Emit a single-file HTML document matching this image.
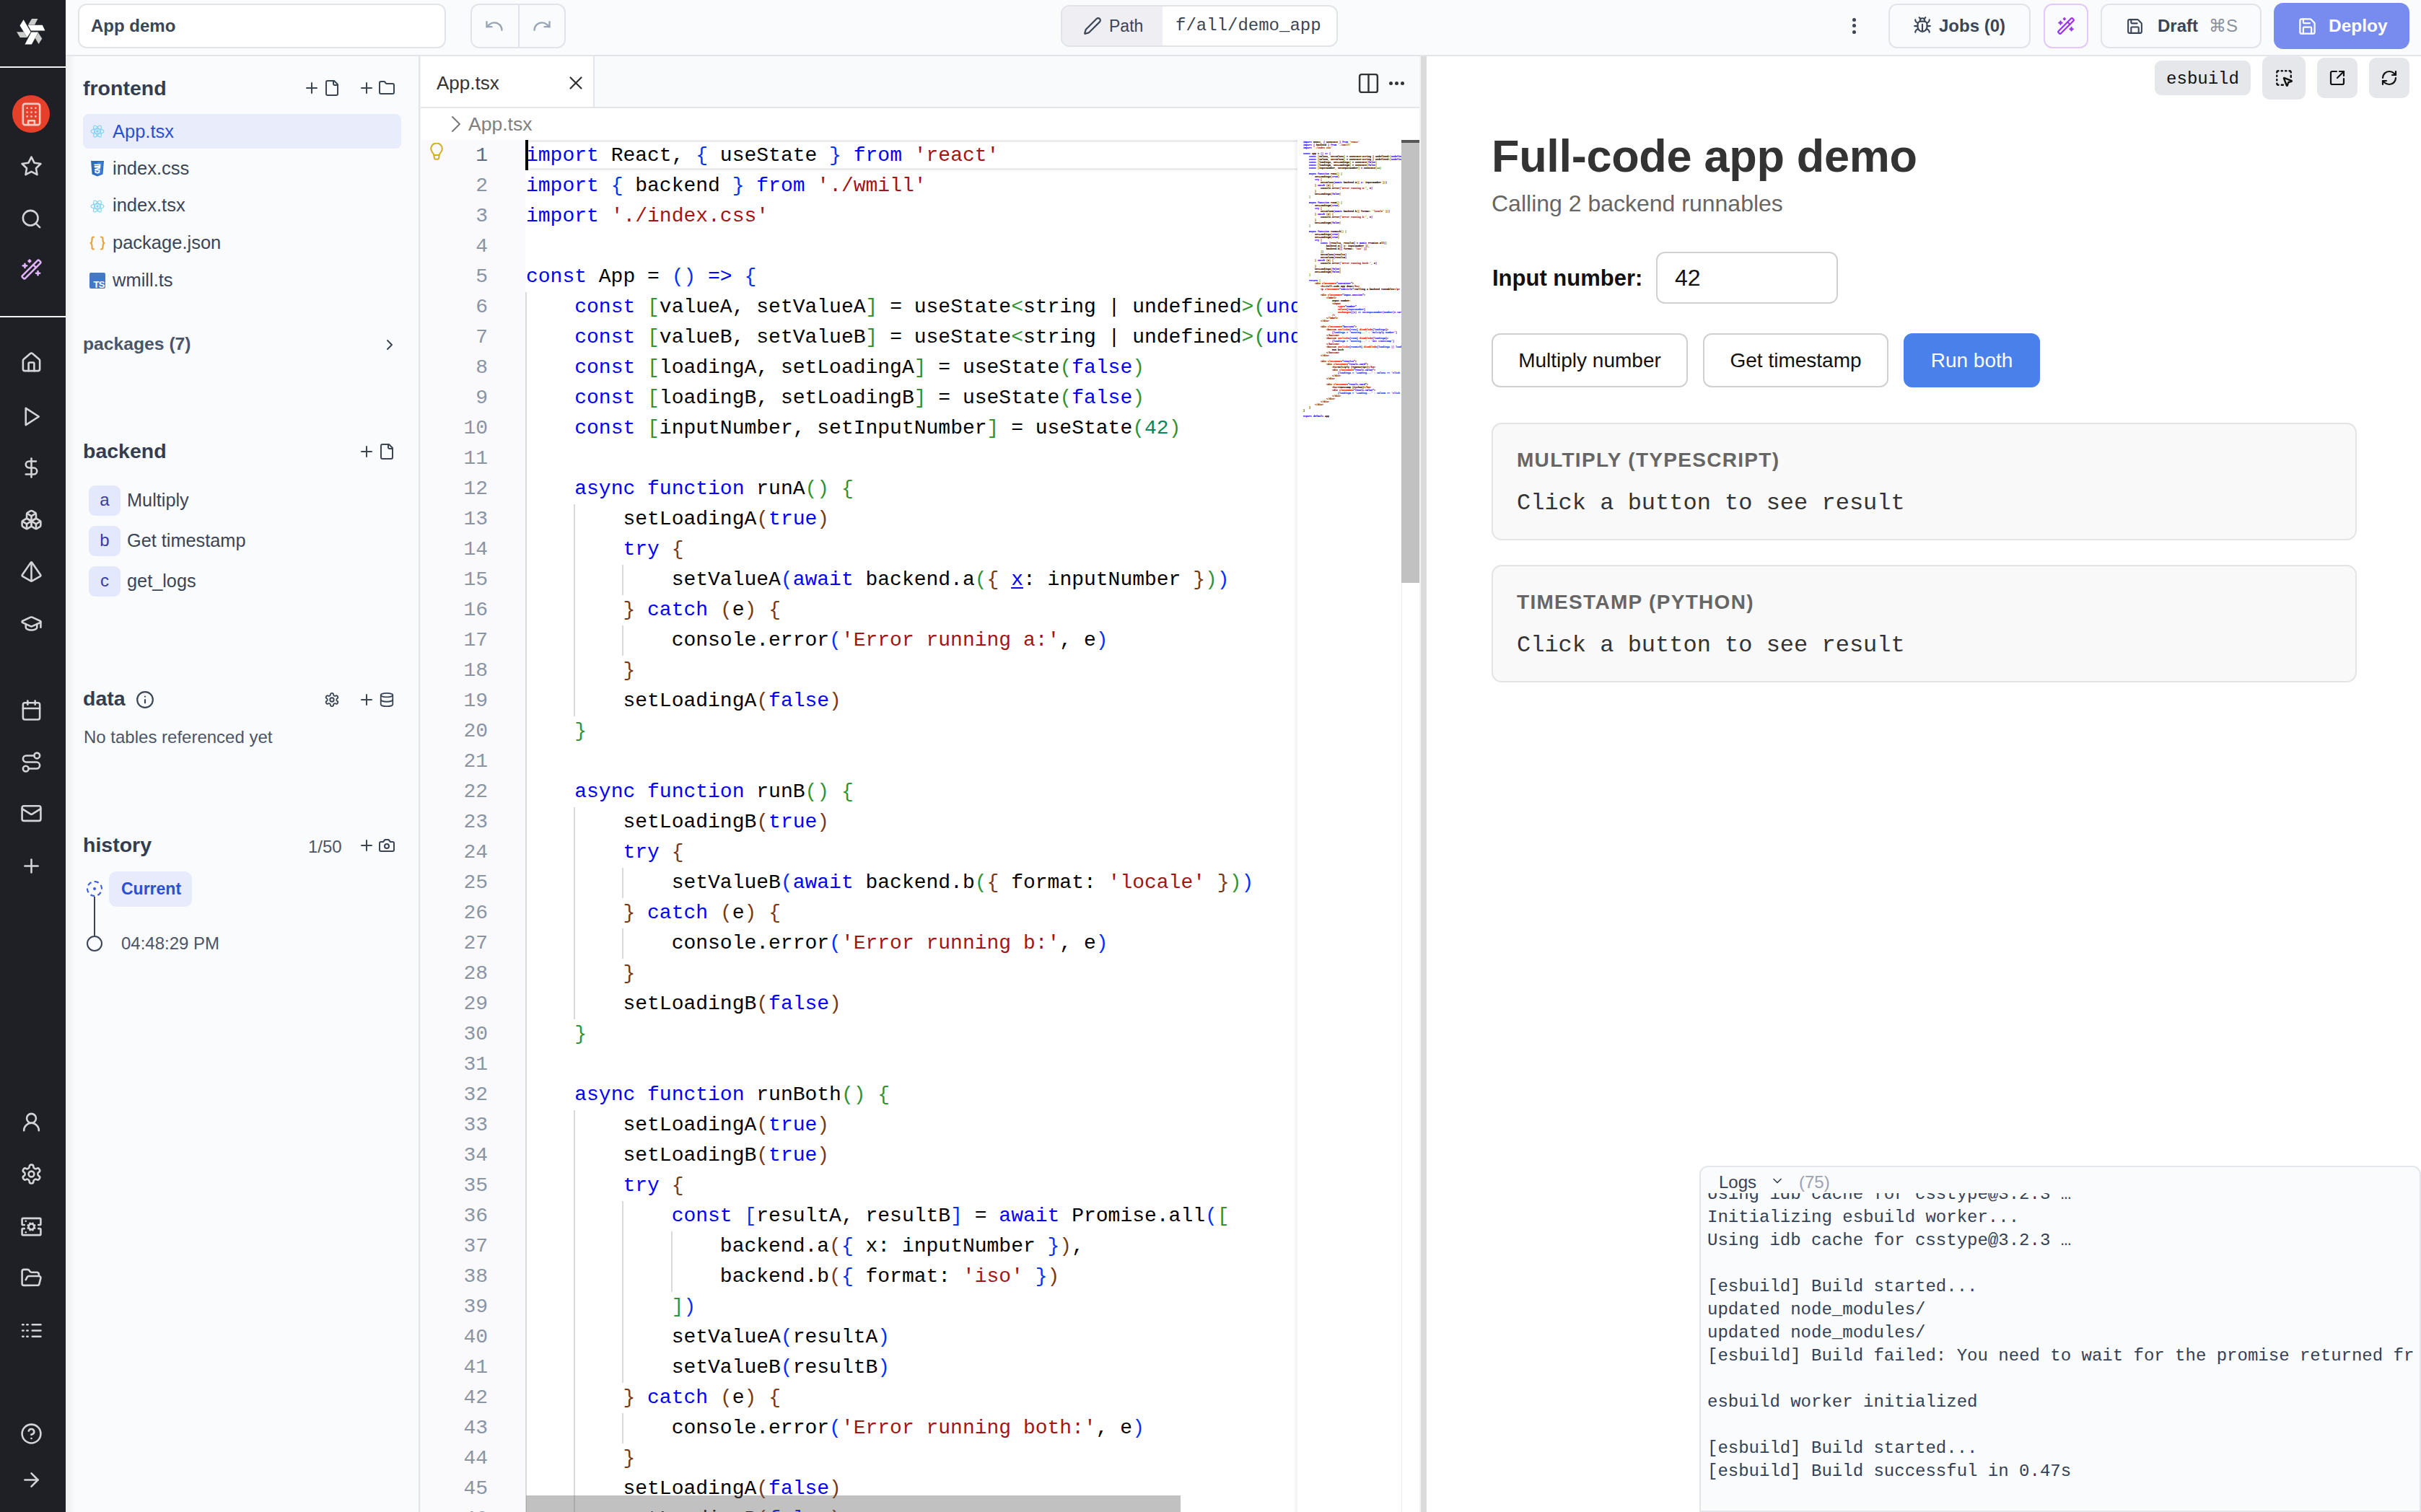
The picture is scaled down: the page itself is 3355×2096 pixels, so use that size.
<!DOCTYPE html>
<html><head><meta charset="utf-8">
<style>
*{box-sizing:border-box;margin:0;padding:0}
html,body{width:3355px;height:2096px;overflow:hidden;background:#fafbfd}
body{position:relative;font-family:"Liberation Sans",sans-serif;color:#3b4556}
.abs{position:absolute}
.ic{position:absolute;line-height:0}
.ic svg{display:block}
.mono{font-family:"Liberation Mono",monospace}
.btn{position:absolute;border:2px solid #e2e4e9;border-radius:12px;background:#fafbfd}
.cl{height:42px;line-height:42px;white-space:pre;font-family:"Liberation Mono",monospace;font-size:28px;color:#000}
.ln{height:42px;line-height:42px;text-align:right;font-family:"Liberation Mono",monospace;font-size:28px;color:#8b94a3}
.ln.act{color:#5d6b82}
.g{position:absolute;width:2px;height:42px;background:#d9d9d9}
.lg{height:32px;line-height:32px;white-space:pre;font-family:"Liberation Mono",monospace;font-size:24px;color:#344154}
.frow{position:absolute;left:115px;width:441px;height:48px;border-radius:8px}
.ftxt{position:absolute;left:41px;top:0;line-height:48px;font-size:25.5px;color:#3b4556}
.sec{position:absolute;left:115px;font-size:28.5px;font-weight:bold;color:#343d4f}
.badge{position:absolute;left:123px;width:44px;height:42px;border-radius:9px;background:#e3e8fc;color:#3a3aa8;font-size:24px;text-align:center;line-height:40px}
.btxt{position:absolute;left:176px;font-size:25.3px;color:#3b4556}
.pbtn{position:absolute;top:462px;height:75px;border:2px solid #d0d0d0;border-radius:12px;background:#fff;font-size:28px;color:#111;text-align:center;line-height:71px}
.card{position:absolute;left:2067px;width:1199px;height:163px;border:2px solid #e4e4e7;border-radius:14px;background:#f9f9fa}
.clab{position:absolute;left:33px;top:34px;font-size:28px;font-weight:bold;color:#666;letter-spacing:1.3px}
.cres{position:absolute;left:33px;top:91px;font-family:"Liberation Mono",monospace;font-size:32px;color:#333}
</style></head><body>

<!-- sidebar -->
<div class="abs" style="left:0;top:0;width:91px;height:2096px;background:#1f2025">
<svg width="50" height="48" viewBox="0 0 1575 1512" style="position:absolute;left:18px;top:20px">
<polygon points="160,760 470,760 620,1005 310,1010" fill="#cbcbcb"/>
<polygon points="460,225 775,765 620,1000 300,490" fill="#fff"/>
<polygon points="820,190 1085,190 945,460 660,460" fill="#cbcbcb"/>
<polygon points="650,465 1285,465 1400,705 785,705" fill="#fff"/>
<polygon points="1110,800 1270,1055 1120,1290 965,1030" fill="#cbcbcb"/>
<polygon points="800,775 1110,775 815,1310 520,1310" fill="#fff"/>
</svg>
<div class="abs" style="left:0;top:92px;width:91px;height:2px;background:#f2f2f2"></div>
<div class="abs" style="left:17px;top:132px;width:52px;height:52px;border-radius:26px;background:#e6402a"></div>
<div class="ic" style="left:25.5px;top:140.5px;width:35px;height:35px"><svg width="35" height="35" viewBox="0 0 24 24" fill="none" stroke="#f5c9c1" stroke-width="1.8" stroke-linecap="round" stroke-linejoin="round" ><rect width="16" height="20" x="4" y="2" rx="2" ry="2"/><path d="M9 22v-4h6v4"/><path d="M8 6h.01"/><path d="M16 6h.01"/><path d="M12 6h.01"/><path d="M12 10h.01"/><path d="M12 14h.01"/><path d="M16 10h.01"/><path d="M16 14h.01"/><path d="M8 10h.01"/><path d="M8 14h.01"/></svg></div>
<div class="abs" style="left:0;top:438px;width:91px;height:2px;background:#f2f2f2"></div>
<div class="ic" style="left:27.5px;top:214.5px;width:31px;height:31px"><svg width="31" height="31" viewBox="0 0 24 24" fill="none" stroke="#d4d4d8" stroke-width="2" stroke-linecap="round" stroke-linejoin="round" ><polygon points="12 2 15.09 8.26 22 9.27 17 14.14 18.18 21.02 12 17.77 5.82 21.02 7 14.14 2 9.27 8.91 8.26 12 2"/></svg></div><div class="ic" style="left:27.5px;top:287.5px;width:31px;height:31px"><svg width="31" height="31" viewBox="0 0 24 24" fill="none" stroke="#d4d4d8" stroke-width="2" stroke-linecap="round" stroke-linejoin="round" ><circle cx="11" cy="11" r="8"/><path d="m21 21-4.3-4.3"/></svg></div><div class="ic" style="left:27.5px;top:486.5px;width:31px;height:31px"><svg width="31" height="31" viewBox="0 0 24 24" fill="none" stroke="#d4d4d8" stroke-width="2" stroke-linecap="round" stroke-linejoin="round" ><path d="M15 21v-8a1 1 0 0 0-1-1h-4a1 1 0 0 0-1 1v8"/><path d="M3 10a2 2 0 0 1 .709-1.528l7-5.999a2 2 0 0 1 2.582 0l7 5.999A2 2 0 0 1 21 10v9a2 2 0 0 1-2 2H5a2 2 0 0 1-2-2z"/></svg></div><div class="ic" style="left:27.5px;top:561.5px;width:31px;height:31px"><svg width="31" height="31" viewBox="0 0 24 24" fill="none" stroke="#d4d4d8" stroke-width="2" stroke-linecap="round" stroke-linejoin="round" ><polygon points="6 3 20 12 6 21 6 3"/></svg></div><div class="ic" style="left:27.5px;top:632.5px;width:31px;height:31px"><svg width="31" height="31" viewBox="0 0 24 24" fill="none" stroke="#d4d4d8" stroke-width="2" stroke-linecap="round" stroke-linejoin="round" ><line x1="12" x2="12" y1="2" y2="22"/><path d="M17 5H9.5a3.5 3.5 0 0 0 0 7h5a3.5 3.5 0 0 1 0 7H6"/></svg></div><div class="ic" style="left:27.5px;top:704.5px;width:31px;height:31px"><svg width="31" height="31" viewBox="0 0 24 24" fill="none" stroke="#d4d4d8" stroke-width="2" stroke-linecap="round" stroke-linejoin="round" ><path d="M2.97 12.92A2 2 0 0 0 2 14.63v3.24a2 2 0 0 0 .97 1.71l3 1.8a2 2 0 0 0 2.06 0L12 19v-5.5l-5-3-4.03 2.42Z"/><path d="m7 16.5-4.74-2.85"/><path d="m7 16.5 5-3"/><path d="M7 16.5v5.17"/><path d="M12 13.5V19l3.97 2.38a2 2 0 0 0 2.06 0l3-1.8a2 2 0 0 0 .97-1.71v-3.24a2 2 0 0 0-.97-1.71L17 10.5l-5 3Z"/><path d="m17 16.5-5-3"/><path d="m17 16.5 4.74-2.85"/><path d="M17 16.5v5.17"/><path d="M7.97 4.42A2 2 0 0 0 7 6.13v4.37l5 3 5-3V6.13a2 2 0 0 0-.97-1.71l-3-1.8a2 2 0 0 0-2.06 0l-3 1.8Z"/><path d="M12 8 7.26 5.15"/><path d="m12 8 4.74-2.85"/><path d="M12 13.5V8"/></svg></div><div class="ic" style="left:27.5px;top:776.5px;width:31px;height:31px"><svg width="31" height="31" viewBox="0 0 24 24" fill="none" stroke="#d4d4d8" stroke-width="2" stroke-linecap="round" stroke-linejoin="round" ><path d="M2.5 16.88a1 1 0 0 1-.32-1.43l9-13.02a1 1 0 0 1 1.64 0l9 13.01a1 1 0 0 1-.32 1.44l-8.51 4.86a2 2 0 0 1-1.98 0Z"/><path d="M12 2v20"/></svg></div><div class="ic" style="left:27.5px;top:848.5px;width:31px;height:31px"><svg width="31" height="31" viewBox="0 0 24 24" fill="none" stroke="#d4d4d8" stroke-width="2" stroke-linecap="round" stroke-linejoin="round" ><path d="M21.42 10.922a1 1 0 0 0-.019-1.838L12.83 5.18a2 2 0 0 0-1.66 0L2.6 9.08a1 1 0 0 0 0 1.832l8.57 3.908a2 2 0 0 0 1.66 0z"/><path d="M22 10v6"/><path d="M6 12.5V16a6 3 0 0 0 12 0v-3.5"/></svg></div><div class="ic" style="left:27.5px;top:968.5px;width:31px;height:31px"><svg width="31" height="31" viewBox="0 0 24 24" fill="none" stroke="#d4d4d8" stroke-width="2" stroke-linecap="round" stroke-linejoin="round" ><rect width="18" height="18" x="3" y="4" rx="2"/><path d="M16 2v4"/><path d="M8 2v4"/><path d="M3 10h18"/></svg></div><div class="ic" style="left:27.5px;top:1040.5px;width:31px;height:31px"><svg width="31" height="31" viewBox="0 0 24 24" fill="none" stroke="#d4d4d8" stroke-width="2" stroke-linecap="round" stroke-linejoin="round" ><circle cx="6" cy="19" r="3"/><path d="M9 19h8.5a3.5 3.5 0 0 0 0-7h-11a3.5 3.5 0 0 1 0-7H15"/><circle cx="18" cy="5" r="3"/></svg></div><div class="ic" style="left:27.5px;top:1111.5px;width:31px;height:31px"><svg width="31" height="31" viewBox="0 0 24 24" fill="none" stroke="#d4d4d8" stroke-width="2" stroke-linecap="round" stroke-linejoin="round" ><rect width="20" height="16" x="2" y="4" rx="2"/><path d="m22 7-8.97 5.7a1.94 1.94 0 0 1-2.06 0L2 7"/></svg></div><div class="ic" style="left:27.5px;top:1184.5px;width:31px;height:31px"><svg width="31" height="31" viewBox="0 0 24 24" fill="none" stroke="#d4d4d8" stroke-width="2" stroke-linecap="round" stroke-linejoin="round" ><path d="M5 12h14"/><path d="M12 5v14"/></svg></div><div class="ic" style="left:27.5px;top:1539.5px;width:31px;height:31px"><svg width="31" height="31" viewBox="0 0 24 24" fill="none" stroke="#d4d4d8" stroke-width="2" stroke-linecap="round" stroke-linejoin="round" ><circle cx="12" cy="8" r="5"/><path d="M20 21a8 8 0 0 0-16 0"/></svg></div><div class="ic" style="left:27.5px;top:1611.5px;width:31px;height:31px"><svg width="31" height="31" viewBox="0 0 24 24" fill="none" stroke="#d4d4d8" stroke-width="2" stroke-linecap="round" stroke-linejoin="round" ><path d="M12.22 2h-.44a2 2 0 0 0-2 2v.18a2 2 0 0 1-1 1.73l-.43.25a2 2 0 0 1-2 0l-.15-.08a2 2 0 0 0-2.73.73l-.22.38a2 2 0 0 0 .73 2.73l.15.1a2 2 0 0 1 1 1.72v.51a2 2 0 0 1-1 1.74l-.15.09a2 2 0 0 0-.73 2.73l.22.38a2 2 0 0 0 2.73.73l.15-.08a2 2 0 0 1 2 0l.43.25a2 2 0 0 1 1 1.73V20a2 2 0 0 0 2 2h.44a2 2 0 0 0 2-2v-.18a2 2 0 0 1 1-1.73l.43-.25a2 2 0 0 1 2 0l.15.08a2 2 0 0 0 2.73-.73l.22-.39a2 2 0 0 0-.73-2.73l-.15-.08a2 2 0 0 1-1-1.74v-.5a2 2 0 0 1 1-1.74l.15-.09a2 2 0 0 0 .73-2.73l-.22-.38a2 2 0 0 0-2.73-.73l-.15.08a2 2 0 0 1-2 0l-.43-.25a2 2 0 0 1-1-1.73V4a2 2 0 0 0-2-2z"/><circle cx="12" cy="12" r="3"/></svg></div><div class="ic" style="left:27.5px;top:1684.5px;width:31px;height:31px"><svg width="31" height="31" viewBox="0 0 24 24" fill="none" stroke="#d4d4d8" stroke-width="2" stroke-linecap="round" stroke-linejoin="round" ><path d="m10.852 14.772-.383.923"/><path d="M13.148 14.772a3 3 0 1 0-2.296-5.544l-.383-.923"/><path d="m13.148 9.228.383-.923"/><path d="m13.53 15.696-.382-.924a3 3 0 1 1-2.296-5.544"/><path d="m14.772 10.852.923-.383"/><path d="m14.772 13.148.923.383"/><path d="M4.5 10H3a1 1 0 0 1-1-1V4a1 1 0 0 1 1-1h18a1 1 0 0 1 1 1v5a1 1 0 0 1-1 1h-1.5"/><path d="M4.5 14H3a1 1 0 0 0-1 1v5a1 1 0 0 0 1 1h18a1 1 0 0 0 1-1v-5a1 1 0 0 0-1-1h-1.5"/><path d="M6 18h.01"/><path d="M6 6h.01"/><path d="m9.228 10.852-.923-.383"/><path d="m9.228 13.148-.923.383"/></svg></div><div class="ic" style="left:27.5px;top:1755.5px;width:31px;height:31px"><svg width="31" height="31" viewBox="0 0 24 24" fill="none" stroke="#d4d4d8" stroke-width="2" stroke-linecap="round" stroke-linejoin="round" ><path d="m6 14 1.5-2.9A2 2 0 0 1 9.24 10H20a2 2 0 0 1 1.94 2.5l-1.54 6a2 2 0 0 1-1.95 1.5H4a2 2 0 0 1-2-2V5a2 2 0 0 1 2-2h3.9a2 2 0 0 1 1.69.9l.81 1.2a2 2 0 0 0 1.67.9H18a2 2 0 0 1 2 2v2"/></svg></div><div class="ic" style="left:27.5px;top:1828.5px;width:31px;height:31px"><svg width="31" height="31" viewBox="0 0 24 24" fill="none" stroke="#d4d4d8" stroke-width="2" stroke-linecap="round" stroke-linejoin="round" ><path d="M2.5 5.6h1"/><path d="M7.2 5.6h1"/><path d="M13 5.6h9"/><path d="M2.5 12h1"/><path d="M7.2 12h1"/><path d="M13 12h9"/><path d="M2.5 18.4h1"/><path d="M7.2 18.4h1"/><path d="M13 18.4h9"/></svg></div><div class="ic" style="left:27.5px;top:1971.5px;width:31px;height:31px"><svg width="31" height="31" viewBox="0 0 24 24" fill="none" stroke="#d4d4d8" stroke-width="2" stroke-linecap="round" stroke-linejoin="round" ><circle cx="12" cy="12" r="10"/><path d="M9.09 9a3 3 0 0 1 5.83 1c0 2-3 3-3 3"/><path d="M12 17h.01"/></svg></div><div class="ic" style="left:27.5px;top:2035.5px;width:31px;height:31px"><svg width="31" height="31" viewBox="0 0 24 24" fill="none" stroke="#d4d4d8" stroke-width="2" stroke-linecap="round" stroke-linejoin="round" ><path d="M5 12h14"/><path d="m12 5 7 7-7 7"/></svg></div><div class="ic" style="left:27.5px;top:357.5px;width:31px;height:31px"><svg width="31" height="31" viewBox="0 0 24 24" fill="none" stroke="#e0b2fa" stroke-width="2" stroke-linecap="round" stroke-linejoin="round" ><path d="m21.64 3.64-1.28-1.28a1.21 1.21 0 0 0-1.72 0L2.36 18.64a1.21 1.21 0 0 0 0 1.72l1.28 1.28a1.2 1.2 0 0 0 1.72 0L21.64 5.36a1.2 1.2 0 0 0 0-1.72"/><path d="m14 7 3 3"/><path d="M5 6v4"/><path d="M19 14v4"/><path d="M10 2v2"/><path d="M7 8H3"/><path d="M21 16h-4"/><path d="M11 3H9"/></svg></div>
</div>

<!-- top bar -->
<div class="abs" style="left:91px;top:0;width:3264px;height:78px;background:#fafbfd;border-bottom:2px solid #e3e5ea"></div>
<div class="btn" style="left:108px;top:5px;width:510px;height:62px;background:#fff"><div class="abs" style="left:16px;top:0;line-height:58px;font-size:24px;font-weight:bold;color:#3b4556">App demo</div></div>
<div class="btn" style="left:652px;top:5px;width:132px;height:62px"><div class="abs" style="left:64px;top:0;width:2px;height:58px;background:#e2e4e9"></div></div>
<div class="ic" style="left:671.0px;top:22.0px;width:28px;height:28px"><svg width="28" height="28" viewBox="0 0 24 24" fill="none" stroke="#9aa5b4" stroke-width="2" stroke-linecap="round" stroke-linejoin="round" ><path d="M3 7v6h6"/><path d="M21 17a9 9 0 0 0-9-9 9 9 0 0 0-6 2.3L3 13"/></svg></div>
<div class="ic" style="left:737.0px;top:22.0px;width:28px;height:28px"><svg width="28" height="28" viewBox="0 0 24 24" fill="none" stroke="#9aa5b4" stroke-width="2" stroke-linecap="round" stroke-linejoin="round" ><path d="M21 7v6h-6"/><path d="M3 17a9 9 0 0 1 9-9 9 9 0 0 1 6 2.3l3 2.7"/></svg></div>
<div class="btn" style="left:1470px;top:7px;width:384px;height:58px;background:#fff;overflow:hidden"><div class="abs" style="left:0;top:0;width:139px;height:54px;background:#eeeef3"></div>
<div class="abs" style="left:65px;top:0;line-height:54px;font-size:23px;color:#3b4556">Path</div>
<div class="abs mono" style="left:157px;top:0;line-height:54px;font-size:24px;color:#3b4556">f/all/demo_app</div></div>
<div class="ic" style="left:1501.0px;top:23.0px;width:26px;height:26px"><svg width="26" height="26" viewBox="0 0 24 24" fill="none" stroke="#3b4556" stroke-width="2" stroke-linecap="round" stroke-linejoin="round" ><path d="M21.174 6.812a1 1 0 0 0-3.986-3.987L3.842 16.174a2 2 0 0 0-.5.83l-1.321 4.352a.5.5 0 0 0 .623.622l4.353-1.32a2 2 0 0 0 .83-.497z"/></svg></div>
<div class="abs" style="left:2567px;top:25px;width:5px;height:5px;border-radius:3px;background:#3b4556"></div>
<div class="abs" style="left:2567px;top:33px;width:5px;height:5px;border-radius:3px;background:#3b4556"></div>
<div class="abs" style="left:2567px;top:42px;width:5px;height:5px;border-radius:3px;background:#3b4556"></div>
<div class="btn" style="left:2617px;top:5px;width:197px;height:62px"><div class="abs" style="left:68px;top:0;line-height:58px;font-size:24px;font-weight:bold;color:#3b4556">Jobs (0)</div></div>
<div class="ic" style="left:2651.0px;top:22.0px;width:26px;height:26px"><svg width="26" height="26" viewBox="0 0 24 24" fill="none" stroke="#3b4556" stroke-width="2" stroke-linecap="round" stroke-linejoin="round" ><path d="m8 2 1.88 1.88"/><path d="M14.12 3.88 16 2"/><path d="M9 7.13v-1a3.003 3.003 0 1 1 6 0v1"/><path d="M12 20c-3.3 0-6-2.7-6-6v-3a4 4 0 0 1 4-4h4a4 4 0 0 1 4 4v3c0 3.3-2.7 6-6 6"/><path d="M12 20v-9"/><path d="M6.53 9C4.6 8.8 3 7.1 3 5"/><path d="M6 13H2"/><path d="M3 21c0-2.1 1.7-3.9 3.8-4"/><path d="M20.97 5c0 2.1-1.6 3.8-3.5 4"/><path d="M22 13h-4"/><path d="M17.2 17c2.1.1 3.8 1.9 3.8 4"/></svg></div>
<div class="btn" style="left:2832px;top:5px;width:62px;height:62px;border-color:#e3c8fb"></div>
<div class="ic" style="left:2850.0px;top:23.0px;width:26px;height:26px"><svg width="26" height="26" viewBox="0 0 24 24" fill="none" stroke="#9b30e8" stroke-width="2" stroke-linecap="round" stroke-linejoin="round" ><path d="m21.64 3.64-1.28-1.28a1.21 1.21 0 0 0-1.72 0L2.36 18.64a1.21 1.21 0 0 0 0 1.72l1.28 1.28a1.2 1.2 0 0 0 1.72 0L21.64 5.36a1.2 1.2 0 0 0 0-1.72"/><path d="m14 7 3 3"/><path d="M5 6v4"/><path d="M19 14v4"/><path d="M10 2v2"/><path d="M7 8H3"/><path d="M21 16h-4"/><path d="M11 3H9"/></svg></div>
<div class="btn" style="left:2911px;top:5px;width:223px;height:62px"><div class="abs" style="left:77px;top:0;line-height:58px;font-size:24px;font-weight:bold;color:#3b4556">Draft</div><div class="abs" style="left:148px;top:0;line-height:58px;font-size:24px;color:#8b919b">&#8984;S</div></div>
<div class="ic" style="left:2945.5px;top:23.5px;width:25px;height:25px"><svg width="25" height="25" viewBox="0 0 24 24" fill="none" stroke="#3b4556" stroke-width="2" stroke-linecap="round" stroke-linejoin="round" ><path d="M15.2 3a2 2 0 0 1 1.4.6l3.8 3.8a2 2 0 0 1 .6 1.4V19a2 2 0 0 1-2 2H5a2 2 0 0 1-2-2V5a2 2 0 0 1 2-2z"/><path d="M17 21v-7a1 1 0 0 0-1-1H8a1 1 0 0 0-1 1v7"/><path d="M7 3v4a1 1 0 0 0 1 1h7"/></svg></div>
<div class="abs" style="left:3151px;top:4px;width:188px;height:64px;border-radius:13px;background:#788cef"><div class="abs" style="left:76px;top:0;line-height:64px;font-size:24.5px;font-weight:bold;color:#fff">Deploy</div></div>
<div class="ic" style="left:3183.5px;top:22.5px;width:27px;height:27px"><svg width="27" height="27" viewBox="0 0 24 24" fill="none" stroke="#ffffff" stroke-width="2" stroke-linecap="round" stroke-linejoin="round" ><path d="M15.2 3a2 2 0 0 1 1.4.6l3.8 3.8a2 2 0 0 1 .6 1.4V19a2 2 0 0 1-2 2H5a2 2 0 0 1-2-2V5a2 2 0 0 1 2-2z"/><path d="M17 21v-7a1 1 0 0 0-1-1H8a1 1 0 0 0-1 1v7"/><path d="M7 3v4a1 1 0 0 0 1 1h7"/></svg></div>

<!-- file panel -->
<div class="abs" style="left:91px;top:78px;width:491px;height:2018px;background:#fafbfd;border-right:2px solid #e3e5ea"></div><div class="abs" style="left:582px;top:78px;width:2px;height:2018px;background:#f4f4f3"></div>
<div class="abs" style="left:91px;top:78px;width:14px;height:2018px;background:linear-gradient(90deg,rgba(0,0,0,0.05),rgba(0,0,0,0))"></div>
<div class="sec" style="top:106px">frontend</div>
<div class="ic" style="left:420.0px;top:110.0px;width:24px;height:24px"><svg width="24" height="24" viewBox="0 0 24 24" fill="none" stroke="#3b4556" stroke-width="2" stroke-linecap="round" stroke-linejoin="round" ><path d="M5 12h14"/><path d="M12 5v14"/></svg></div><div class="ic" style="left:448.0px;top:110.0px;width:24px;height:24px"><svg width="24" height="24" viewBox="0 0 24 24" fill="none" stroke="#3b4556" stroke-width="2" stroke-linecap="round" stroke-linejoin="round" ><path d="M15 2H6a2 2 0 0 0-2 2v16a2 2 0 0 0 2 2h12a2 2 0 0 0 2-2V7Z"/><path d="M14 2v4a2 2 0 0 0 2 2h4"/></svg></div>
<div class="ic" style="left:496.0px;top:110.0px;width:24px;height:24px"><svg width="24" height="24" viewBox="0 0 24 24" fill="none" stroke="#3b4556" stroke-width="2" stroke-linecap="round" stroke-linejoin="round" ><path d="M5 12h14"/><path d="M12 5v14"/></svg></div><div class="ic" style="left:524.0px;top:110.0px;width:24px;height:24px"><svg width="24" height="24" viewBox="0 0 24 24" fill="none" stroke="#3b4556" stroke-width="2" stroke-linecap="round" stroke-linejoin="round" ><path d="M20 20a2 2 0 0 0 2-2V8a2 2 0 0 0-2-2h-7.9a2 2 0 0 1-1.69-.9L9.6 3.9A2 2 0 0 0 7.93 3H4a2 2 0 0 0-2 2v13a2 2 0 0 0 2 2Z"/></svg></div>
<div class="frow" style="top:158px;background:#e8ecfb"><div class="ftxt" style="color:#2b4fd6">App.tsx</div></div>
<div class="frow" style="top:209px"><div class="ftxt">index.css</div></div>
<div class="frow" style="top:260px"><div class="ftxt">index.tsx</div></div>
<div class="frow" style="top:312px"><div class="ftxt">package.json</div></div>
<div class="frow" style="top:364px"><div class="ftxt">wmill.ts</div></div>
<svg class="abs" style="left:125px;top:173px" width="20" height="18" viewBox="-12 -11 24 22" fill="none" stroke="#7fd3f5" stroke-width="1.4"><ellipse rx="11" ry="4.2"/><ellipse rx="11" ry="4.2" transform="rotate(60)"/><ellipse rx="11" ry="4.2" transform="rotate(120)"/><circle r="2.2" fill="#7fd3f5" stroke="none"/></svg><svg class="abs" style="left:126px;top:223px" width="18" height="22" viewBox="0 0 18 22"><path d="M0 0H18L16.4 18.5L9 21.5L1.6 18.5Z" fill="#2f6ac0"/><path d="M9 1.5H16.3L15 17.6L9 20Z" fill="#3d80d8"/><path d="M4.5 4.5H13.5L13 10.5L9.5 11.8L9 12L12.7 12.2L12.2 16.5L9 17.8L5.5 16.5L5.3 14H7.3L7.4 15.2L9 15.8L10.4 15.2L10.6 13.5H5.2L5 11.5L10.8 9.5H4.9L4.7 7L11.2 6.9L11.3 6.3H4.6Z" fill="#fff"/></svg><svg class="abs" style="left:125px;top:277px" width="20" height="18" viewBox="-12 -11 24 22" fill="none" stroke="#7fd3f5" stroke-width="1.4"><ellipse rx="11" ry="4.2"/><ellipse rx="11" ry="4.2" transform="rotate(60)"/><ellipse rx="11" ry="4.2" transform="rotate(120)"/><circle r="2.2" fill="#7fd3f5" stroke="none"/></svg><svg class="abs" style="left:124px;top:327px" width="22" height="20" viewBox="0 0 22 20" fill="none" stroke="#e9a23b" stroke-width="2.2" stroke-linecap="round" stroke-linejoin="round"><path d="M6 1.5C3.5 1.5 3.5 3 3.5 5.5C3.5 8 3 9.5 1.5 10C3 10.5 3.5 12 3.5 14.5C3.5 17 3.5 18.5 6 18.5"/><path d="M16 1.5C18.5 1.5 18.5 3 18.5 5.5C18.5 8 19 9.5 20.5 10C19 10.5 18.5 12 18.5 14.5C18.5 17 18.5 18.5 16 18.5"/></svg><div class="abs" style="left:124px;top:378px;width:22px;height:22px;border-radius:2px;background:#4378c7"><div class="abs" style="right:1px;bottom:-3px;font-size:13px;font-weight:bold;color:#fff;line-height:16px;letter-spacing:-0.5px">TS</div></div>
<div class="abs" style="left:115px;top:463px;font-size:24.7px;font-weight:bold;color:#4b5568">packages (7)</div>
<div class="ic" style="left:528.0px;top:466.0px;width:24px;height:24px"><svg width="24" height="24" viewBox="0 0 24 24" fill="none" stroke="#3b4556" stroke-width="2" stroke-linecap="round" stroke-linejoin="round" ><path d="m9 18 6-6-6-6"/></svg></div>
<div class="sec" style="top:609px">backend</div>
<div class="ic" style="left:496.0px;top:614.0px;width:24px;height:24px"><svg width="24" height="24" viewBox="0 0 24 24" fill="none" stroke="#3b4556" stroke-width="2" stroke-linecap="round" stroke-linejoin="round" ><path d="M5 12h14"/><path d="M12 5v14"/></svg></div><div class="ic" style="left:524.0px;top:614.0px;width:24px;height:24px"><svg width="24" height="24" viewBox="0 0 24 24" fill="none" stroke="#3b4556" stroke-width="2" stroke-linecap="round" stroke-linejoin="round" ><path d="M15 2H6a2 2 0 0 0-2 2v16a2 2 0 0 0 2 2h12a2 2 0 0 0 2-2V7Z"/><path d="M14 2v4a2 2 0 0 0 2 2h4"/></svg></div>
<div class="badge" style="top:673px">a</div><div class="btxt" style="top:679px">Multiply</div>
<div class="badge" style="top:729px">b</div><div class="btxt" style="top:735px">Get timestamp</div>
<div class="badge" style="top:785px">c</div><div class="btxt" style="top:791px">get_logs</div>
<div class="sec" style="top:952px">data</div>
<div class="ic" style="left:188.0px;top:957.0px;width:26px;height:26px"><svg width="26" height="26" viewBox="0 0 24 24" fill="none" stroke="#3b4556" stroke-width="2" stroke-linecap="round" stroke-linejoin="round" ><circle cx="12" cy="12" r="10"/><path d="M12 16v-4"/><path d="M12 8h.01"/></svg></div>
<div class="ic" style="left:449.0px;top:959.0px;width:22px;height:22px"><svg width="22" height="22" viewBox="0 0 24 24" fill="none" stroke="#3b4556" stroke-width="2" stroke-linecap="round" stroke-linejoin="round" ><path d="M12.22 2h-.44a2 2 0 0 0-2 2v.18a2 2 0 0 1-1 1.73l-.43.25a2 2 0 0 1-2 0l-.15-.08a2 2 0 0 0-2.73.73l-.22.38a2 2 0 0 0 .73 2.73l.15.1a2 2 0 0 1 1 1.72v.51a2 2 0 0 1-1 1.74l-.15.09a2 2 0 0 0-.73 2.73l.22.38a2 2 0 0 0 2.73.73l.15-.08a2 2 0 0 1 2 0l.43.25a2 2 0 0 1 1 1.73V20a2 2 0 0 0 2 2h.44a2 2 0 0 0 2-2v-.18a2 2 0 0 1 1-1.73l.43-.25a2 2 0 0 1 2 0l.15.08a2 2 0 0 0 2.73-.73l.22-.39a2 2 0 0 0-.73-2.73l-.15-.08a2 2 0 0 1-1-1.74v-.5a2 2 0 0 1 1-1.74l.15-.09a2 2 0 0 0 .73-2.73l-.22-.38a2 2 0 0 0-2.73-.73l-.15.08a2 2 0 0 1-2 0l-.43-.25a2 2 0 0 1-1-1.73V4a2 2 0 0 0-2-2z"/><circle cx="12" cy="12" r="3"/></svg></div>
<div class="ic" style="left:496.0px;top:958.0px;width:24px;height:24px"><svg width="24" height="24" viewBox="0 0 24 24" fill="none" stroke="#3b4556" stroke-width="2" stroke-linecap="round" stroke-linejoin="round" ><path d="M5 12h14"/><path d="M12 5v14"/></svg></div><div class="ic" style="left:525.0px;top:959.0px;width:22px;height:22px"><svg width="22" height="22" viewBox="0 0 24 24" fill="none" stroke="#3b4556" stroke-width="2" stroke-linecap="round" stroke-linejoin="round" ><ellipse cx="12" cy="5" rx="9" ry="3"/><path d="M3 5V19A9 3 0 0 0 21 19V5"/><path d="M3 12A9 3 0 0 0 21 12"/></svg></div>
<div class="abs" style="left:116px;top:1008px;font-size:24px;color:#4b5568">No tables referenced yet</div>
<div class="sec" style="top:1155px">history</div>
<div class="abs" style="left:427px;top:1160px;font-size:24px;color:#4b5568">1/50</div>
<div class="ic" style="left:496.0px;top:1160.0px;width:24px;height:24px"><svg width="24" height="24" viewBox="0 0 24 24" fill="none" stroke="#3b4556" stroke-width="2" stroke-linecap="round" stroke-linejoin="round" ><path d="M5 12h14"/><path d="M12 5v14"/></svg></div><div class="ic" style="left:524.0px;top:1160.0px;width:24px;height:24px"><svg width="24" height="24" viewBox="0 0 24 24" fill="none" stroke="#3b4556" stroke-width="2" stroke-linecap="round" stroke-linejoin="round" ><path d="M14.5 4h-5L7 7H4a2 2 0 0 0-2 2v9a2 2 0 0 0 2 2h16a2 2 0 0 0 2-2V9a2 2 0 0 0-2-2h-3l-2.5-3z"/><circle cx="12" cy="13" r="3"/></svg></div>
<div class="abs" style="left:120px;top:1221px;width:22px;height:22px;border:2px dashed #3b5bdb;border-radius:11px"></div>
<div class="abs" style="left:129px;top:1230px;width:4px;height:4px;border-radius:2px;background:#3b5bdb"></div>
<div class="abs" style="left:130px;top:1243px;width:2px;height:54px;background:#3b4556"></div>
<div class="abs" style="left:120px;top:1297px;width:22px;height:22px;border:2px solid #3b4556;border-radius:11px"></div>
<div class="abs" style="left:151px;top:1208px;width:115px;height:49px;border-radius:10px;background:#e7ebfb"><div class="abs" style="left:17px;top:0;line-height:49px;font-size:23px;font-weight:bold;color:#2b4fd6">Current</div></div>
<div class="abs" style="left:168px;top:1294px;font-size:24px;color:#4b5568">04:48:29 PM</div>

<!-- editor -->
<div class="abs" style="left:583px;top:78px;width:1384px;height:2018px;background:#fff;overflow:hidden">
  <div class="abs" style="left:0;top:0;width:1384px;height:72px;background:#f9fafc;border-bottom:2px solid #e3e5ea"></div>
  <div class="abs" style="left:0;top:0;width:241px;height:70px;background:#fff;border-right:2px solid #e3e5ea"><div class="abs" style="left:22px;top:2px;line-height:70px;font-size:26px;color:#333">App.tsx</div></div>
</div>
<div class="ic" style="left:783.0px;top:100.0px;width:30px;height:30px"><svg width="30" height="30" viewBox="0 0 24 24" fill="none" stroke="#333" stroke-width="1.8" stroke-linecap="round" stroke-linejoin="round" ><path d="M18 6 6 18"/><path d="m6 6 12 12"/></svg></div>
<div class="ic" style="left:1879.5px;top:98.5px;width:33px;height:33px"><svg width="33" height="33" viewBox="0 0 24 24" fill="none" stroke="#333" stroke-width="1.8" stroke-linecap="round" stroke-linejoin="round" ><rect width="18" height="18" x="3" y="3" rx="2"/><path d="M12 3v18"/></svg></div>
<div class="abs" style="left:1925px;top:113px;width:5px;height:5px;border-radius:3px;background:#333"></div>
<div class="abs" style="left:1933px;top:113px;width:5px;height:5px;border-radius:3px;background:#333"></div>
<div class="abs" style="left:1941px;top:113px;width:5px;height:5px;border-radius:3px;background:#333"></div>
<div class="ic" style="left:612.0px;top:152.0px;width:40px;height:40px"><svg width="40" height="40" viewBox="0 0 24 24" fill="none" stroke="#777" stroke-width="1.2" stroke-linecap="round" stroke-linejoin="round" ><path d="m9 18 6-6-6-6"/></svg></div>
<div class="abs" style="left:649px;top:157px;font-size:26.5px;color:#808080">App.tsx</div>
<div class="abs" style="left:584px;top:194px;width:144px;height:1902px;background:#fafafc"></div>
<div class="abs" style="left:728px;top:194px;width:1070px;height:42px;border-top:3px solid #ececec;border-bottom:3px solid #ececec"></div>
<div class="abs" style="left:583px;top:195px;width:93px"><div class="ln act">1</div><div class="ln">2</div><div class="ln">3</div><div class="ln">4</div><div class="ln">5</div><div class="ln">6</div><div class="ln">7</div><div class="ln">8</div><div class="ln">9</div><div class="ln">10</div><div class="ln">11</div><div class="ln">12</div><div class="ln">13</div><div class="ln">14</div><div class="ln">15</div><div class="ln">16</div><div class="ln">17</div><div class="ln">18</div><div class="ln">19</div><div class="ln">20</div><div class="ln">21</div><div class="ln">22</div><div class="ln">23</div><div class="ln">24</div><div class="ln">25</div><div class="ln">26</div><div class="ln">27</div><div class="ln">28</div><div class="ln">29</div><div class="ln">30</div><div class="ln">31</div><div class="ln">32</div><div class="ln">33</div><div class="ln">34</div><div class="ln">35</div><div class="ln">36</div><div class="ln">37</div><div class="ln">38</div><div class="ln">39</div><div class="ln">40</div><div class="ln">41</div><div class="ln">42</div><div class="ln">43</div><div class="ln">44</div><div class="ln">45</div><div class="ln">46</div></div>
<svg class="abs" style="left:596px;top:198px" width="18" height="24" viewBox="0 0 18 24" fill="none" stroke="#d4ab25" stroke-width="2" stroke-linejoin="round"><path d="M5.4 17C5 14.3 1.2 12.5 1.2 8.3A7.8 7.8 0 0 1 16.8 8.3C16.8 12.5 13 14.3 12.6 17Z"/><path d="M5.4 17H12.6L12.2 21Q11.9 22.8 10.3 22.8H7.7Q6.1 22.8 5.8 21Z"/></svg>
<div class="abs" style="left:728px;top:0;width:1070px;height:2096px;overflow:hidden">
  <div class="abs" style="left:1px;top:195px"><div class="cl"><span style="color:#0000ff">import</span> React, <span style="color:#0431fa">{</span> useState <span style="color:#0431fa">}</span> <span style="color:#0000ff">from</span> <span style="color:#a31515">&#x27;react&#x27;</span></div>
<div class="cl"><span style="color:#0000ff">import</span> <span style="color:#0431fa">{</span> backend <span style="color:#0431fa">}</span> <span style="color:#0000ff">from</span> <span style="color:#a31515">&#x27;./wmill&#x27;</span></div>
<div class="cl"><span style="color:#0000ff">import</span> <span style="color:#a31515">&#x27;./index.css&#x27;</span></div>
<div class="cl">&nbsp;</div>
<div class="cl"><span style="color:#0000ff">const</span> App = <span style="color:#0431fa">()</span> <span style="color:#0000ff">=&gt;</span> <span style="color:#0431fa">{</span></div>
<div class="cl">    <span style="color:#0000ff">const</span> <span style="color:#319331">[</span>valueA, setValueA<span style="color:#319331">]</span> = useState<span style="color:#319331">&lt;</span>string | undefined<span style="color:#319331">&gt;(</span><span style="color:#0000ff">undefined</span><span style="color:#319331">)</span></div>
<div class="cl">    <span style="color:#0000ff">const</span> <span style="color:#319331">[</span>valueB, setValueB<span style="color:#319331">]</span> = useState<span style="color:#319331">&lt;</span>string | undefined<span style="color:#319331">&gt;(</span><span style="color:#0000ff">undefined</span><span style="color:#319331">)</span></div>
<div class="cl">    <span style="color:#0000ff">const</span> <span style="color:#319331">[</span>loadingA, setLoadingA<span style="color:#319331">]</span> = useState<span style="color:#319331">(</span><span style="color:#0000ff">false</span><span style="color:#319331">)</span></div>
<div class="cl">    <span style="color:#0000ff">const</span> <span style="color:#319331">[</span>loadingB, setLoadingB<span style="color:#319331">]</span> = useState<span style="color:#319331">(</span><span style="color:#0000ff">false</span><span style="color:#319331">)</span></div>
<div class="cl">    <span style="color:#0000ff">const</span> <span style="color:#319331">[</span>inputNumber, setInputNumber<span style="color:#319331">]</span> = useState<span style="color:#319331">(</span><span style="color:#098658">42</span><span style="color:#319331">)</span></div>
<div class="cl">&nbsp;</div>
<div class="cl">    <span style="color:#0000ff">async</span> <span style="color:#0000ff">function</span> runA<span style="color:#319331">()</span> <span style="color:#319331">{</span></div>
<div class="cl">        setLoadingA<span style="color:#7b3814">(</span><span style="color:#0000ff">true</span><span style="color:#7b3814">)</span></div>
<div class="cl">        <span style="color:#0000ff">try</span> <span style="color:#7b3814">{</span></div>
<div class="cl">            setValueA<span style="color:#0431fa">(</span><span style="color:#0000ff">await</span> backend.a<span style="color:#319331">(</span><span style="color:#7b3814">{</span> <span style="color:#0000ff;text-decoration:underline;text-underline-offset:3px;text-decoration-thickness:2px">x</span>: inputNumber <span style="color:#7b3814">}</span><span style="color:#319331">)</span><span style="color:#0431fa">)</span></div>
<div class="cl">        <span style="color:#7b3814">}</span> <span style="color:#0000ff">catch</span> <span style="color:#7b3814">(</span>e<span style="color:#7b3814">)</span> <span style="color:#7b3814">{</span></div>
<div class="cl">            console.error<span style="color:#0431fa">(</span><span style="color:#a31515">&#x27;Error running a:&#x27;</span>, e<span style="color:#0431fa">)</span></div>
<div class="cl">        <span style="color:#7b3814">}</span></div>
<div class="cl">        setLoadingA<span style="color:#7b3814">(</span><span style="color:#0000ff">false</span><span style="color:#7b3814">)</span></div>
<div class="cl">    <span style="color:#319331">}</span></div>
<div class="cl">&nbsp;</div>
<div class="cl">    <span style="color:#0000ff">async</span> <span style="color:#0000ff">function</span> runB<span style="color:#319331">()</span> <span style="color:#319331">{</span></div>
<div class="cl">        setLoadingB<span style="color:#7b3814">(</span><span style="color:#0000ff">true</span><span style="color:#7b3814">)</span></div>
<div class="cl">        <span style="color:#0000ff">try</span> <span style="color:#7b3814">{</span></div>
<div class="cl">            setValueB<span style="color:#0431fa">(</span><span style="color:#0000ff">await</span> backend.b<span style="color:#319331">(</span><span style="color:#7b3814">{</span> format: <span style="color:#a31515">&#x27;locale&#x27;</span> <span style="color:#7b3814">}</span><span style="color:#319331">)</span><span style="color:#0431fa">)</span></div>
<div class="cl">        <span style="color:#7b3814">}</span> <span style="color:#0000ff">catch</span> <span style="color:#7b3814">(</span>e<span style="color:#7b3814">)</span> <span style="color:#7b3814">{</span></div>
<div class="cl">            console.error<span style="color:#0431fa">(</span><span style="color:#a31515">&#x27;Error running b:&#x27;</span>, e<span style="color:#0431fa">)</span></div>
<div class="cl">        <span style="color:#7b3814">}</span></div>
<div class="cl">        setLoadingB<span style="color:#7b3814">(</span><span style="color:#0000ff">false</span><span style="color:#7b3814">)</span></div>
<div class="cl">    <span style="color:#319331">}</span></div>
<div class="cl">&nbsp;</div>
<div class="cl">    <span style="color:#0000ff">async</span> <span style="color:#0000ff">function</span> runBoth<span style="color:#319331">()</span> <span style="color:#319331">{</span></div>
<div class="cl">        setLoadingA<span style="color:#7b3814">(</span><span style="color:#0000ff">true</span><span style="color:#7b3814">)</span></div>
<div class="cl">        setLoadingB<span style="color:#7b3814">(</span><span style="color:#0000ff">true</span><span style="color:#7b3814">)</span></div>
<div class="cl">        <span style="color:#0000ff">try</span> <span style="color:#7b3814">{</span></div>
<div class="cl">            <span style="color:#0000ff">const</span> <span style="color:#0431fa">[</span>resultA, resultB<span style="color:#0431fa">]</span> = <span style="color:#0000ff">await</span> Promise.all<span style="color:#0431fa">(</span><span style="color:#319331">[</span></div>
<div class="cl">                backend.a<span style="color:#7b3814">(</span><span style="color:#0431fa">{</span> x: inputNumber <span style="color:#0431fa">}</span><span style="color:#7b3814">)</span>,</div>
<div class="cl">                backend.b<span style="color:#7b3814">(</span><span style="color:#0431fa">{</span> format: <span style="color:#a31515">&#x27;iso&#x27;</span> <span style="color:#0431fa">}</span><span style="color:#7b3814">)</span></div>
<div class="cl">            <span style="color:#319331">]</span><span style="color:#0431fa">)</span></div>
<div class="cl">            setValueA<span style="color:#0431fa">(</span>resultA<span style="color:#0431fa">)</span></div>
<div class="cl">            setValueB<span style="color:#0431fa">(</span>resultB<span style="color:#0431fa">)</span></div>
<div class="cl">        <span style="color:#7b3814">}</span> <span style="color:#0000ff">catch</span> <span style="color:#7b3814">(</span>e<span style="color:#7b3814">)</span> <span style="color:#7b3814">{</span></div>
<div class="cl">            console.error<span style="color:#0431fa">(</span><span style="color:#a31515">&#x27;Error running both:&#x27;</span>, e<span style="color:#0431fa">)</span></div>
<div class="cl">        <span style="color:#7b3814">}</span></div>
<div class="cl">        setLoadingA<span style="color:#7b3814">(</span><span style="color:#0000ff">false</span><span style="color:#7b3814">)</span></div>
<div class="cl">        setLoadingB<span style="color:#7b3814">(</span><span style="color:#0000ff">false</span><span style="color:#7b3814">)</span></div>
<div class="cl">    <span style="color:#319331">}</span></div></div>
</div>
<div class="g" style="left:728.0px;top:405px"></div><div class="g" style="left:728.0px;top:447px"></div><div class="g" style="left:728.0px;top:489px"></div><div class="g" style="left:728.0px;top:531px"></div><div class="g" style="left:728.0px;top:573px"></div><div class="g" style="left:728.0px;top:615px"></div><div class="g" style="left:728.0px;top:657px"></div><div class="g" style="left:728.0px;top:699px"></div><div class="g" style="left:795.2px;top:699px"></div><div class="g" style="left:728.0px;top:741px"></div><div class="g" style="left:795.2px;top:741px"></div><div class="g" style="left:728.0px;top:783px"></div><div class="g" style="left:795.2px;top:783px"></div><div class="g" style="left:862.4px;top:783px"></div><div class="g" style="left:728.0px;top:825px"></div><div class="g" style="left:795.2px;top:825px"></div><div class="g" style="left:728.0px;top:867px"></div><div class="g" style="left:795.2px;top:867px"></div><div class="g" style="left:862.4px;top:867px"></div><div class="g" style="left:728.0px;top:909px"></div><div class="g" style="left:795.2px;top:909px"></div><div class="g" style="left:728.0px;top:951px"></div><div class="g" style="left:795.2px;top:951px"></div><div class="g" style="left:728.0px;top:993px"></div><div class="g" style="left:728.0px;top:1035px"></div><div class="g" style="left:728.0px;top:1077px"></div><div class="g" style="left:728.0px;top:1119px"></div><div class="g" style="left:795.2px;top:1119px"></div><div class="g" style="left:728.0px;top:1161px"></div><div class="g" style="left:795.2px;top:1161px"></div><div class="g" style="left:728.0px;top:1203px"></div><div class="g" style="left:795.2px;top:1203px"></div><div class="g" style="left:862.4px;top:1203px"></div><div class="g" style="left:728.0px;top:1245px"></div><div class="g" style="left:795.2px;top:1245px"></div><div class="g" style="left:728.0px;top:1287px"></div><div class="g" style="left:795.2px;top:1287px"></div><div class="g" style="left:862.4px;top:1287px"></div><div class="g" style="left:728.0px;top:1329px"></div><div class="g" style="left:795.2px;top:1329px"></div><div class="g" style="left:728.0px;top:1371px"></div><div class="g" style="left:795.2px;top:1371px"></div><div class="g" style="left:728.0px;top:1413px"></div><div class="g" style="left:728.0px;top:1455px"></div><div class="g" style="left:728.0px;top:1497px"></div><div class="g" style="left:728.0px;top:1539px"></div><div class="g" style="left:795.2px;top:1539px"></div><div class="g" style="left:728.0px;top:1581px"></div><div class="g" style="left:795.2px;top:1581px"></div><div class="g" style="left:728.0px;top:1623px"></div><div class="g" style="left:795.2px;top:1623px"></div><div class="g" style="left:728.0px;top:1665px"></div><div class="g" style="left:795.2px;top:1665px"></div><div class="g" style="left:862.4px;top:1665px"></div><div class="g" style="left:728.0px;top:1707px"></div><div class="g" style="left:795.2px;top:1707px"></div><div class="g" style="left:862.4px;top:1707px"></div><div class="g" style="left:929.6px;top:1707px"></div><div class="g" style="left:728.0px;top:1749px"></div><div class="g" style="left:795.2px;top:1749px"></div><div class="g" style="left:862.4px;top:1749px"></div><div class="g" style="left:929.6px;top:1749px"></div><div class="g" style="left:728.0px;top:1791px"></div><div class="g" style="left:795.2px;top:1791px"></div><div class="g" style="left:862.4px;top:1791px"></div><div class="g" style="left:728.0px;top:1833px"></div><div class="g" style="left:795.2px;top:1833px"></div><div class="g" style="left:862.4px;top:1833px"></div><div class="g" style="left:728.0px;top:1875px"></div><div class="g" style="left:795.2px;top:1875px"></div><div class="g" style="left:862.4px;top:1875px"></div><div class="g" style="left:728.0px;top:1917px"></div><div class="g" style="left:795.2px;top:1917px"></div><div class="g" style="left:728.0px;top:1959px"></div><div class="g" style="left:795.2px;top:1959px"></div><div class="g" style="left:862.4px;top:1959px"></div><div class="g" style="left:728.0px;top:2001px"></div><div class="g" style="left:795.2px;top:2001px"></div><div class="g" style="left:728.0px;top:2043px"></div><div class="g" style="left:795.2px;top:2043px"></div><div class="g" style="left:728.0px;top:2085px"></div><div class="g" style="left:795.2px;top:2085px"></div><div class="g" style="left:728.0px;top:2127px"></div>
<div class="abs" style="left:728px;top:194px;width:4px;height:42px;background:#000"></div>
<!-- minimap -->
<div class="abs" style="left:1792px;top:194px;width:6px;height:1902px;background:linear-gradient(90deg,rgba(0,0,0,0),rgba(0,0,0,0.05))"></div>
<div class="abs" style="left:1798px;top:194px;width:144px;height:1902px;overflow:hidden;background:#fff">
  <div class="abs" style="left:8px;top:1px;transform-origin:0 0;transform:scale(0.119,0.0952);font-weight:bold;-webkit-text-stroke:1px currentColor"><div class="cl"><span style="color:#0000ff">import</span> React, <span style="color:#0431fa">{</span> useState <span style="color:#0431fa">}</span> <span style="color:#0000ff">from</span> <span style="color:#a31515">&#x27;react&#x27;</span></div>
<div class="cl"><span style="color:#0000ff">import</span> <span style="color:#0431fa">{</span> backend <span style="color:#0431fa">}</span> <span style="color:#0000ff">from</span> <span style="color:#a31515">&#x27;./wmill&#x27;</span></div>
<div class="cl"><span style="color:#0000ff">import</span> <span style="color:#a31515">&#x27;./index.css&#x27;</span></div>
<div class="cl">&nbsp;</div>
<div class="cl"><span style="color:#0000ff">const</span> App = <span style="color:#0431fa">()</span> <span style="color:#0000ff">=&gt;</span> <span style="color:#0431fa">{</span></div>
<div class="cl">    <span style="color:#0000ff">const</span> <span style="color:#319331">[</span>valueA, setValueA<span style="color:#319331">]</span> = useState<span style="color:#319331">&lt;</span>string | undefined<span style="color:#319331">&gt;(</span><span style="color:#0000ff">undefined</span><span style="color:#319331">)</span></div>
<div class="cl">    <span style="color:#0000ff">const</span> <span style="color:#319331">[</span>valueB, setValueB<span style="color:#319331">]</span> = useState<span style="color:#319331">&lt;</span>string | undefined<span style="color:#319331">&gt;(</span><span style="color:#0000ff">undefined</span><span style="color:#319331">)</span></div>
<div class="cl">    <span style="color:#0000ff">const</span> <span style="color:#319331">[</span>loadingA, setLoadingA<span style="color:#319331">]</span> = useState<span style="color:#319331">(</span><span style="color:#0000ff">false</span><span style="color:#319331">)</span></div>
<div class="cl">    <span style="color:#0000ff">const</span> <span style="color:#319331">[</span>loadingB, setLoadingB<span style="color:#319331">]</span> = useState<span style="color:#319331">(</span><span style="color:#0000ff">false</span><span style="color:#319331">)</span></div>
<div class="cl">    <span style="color:#0000ff">const</span> <span style="color:#319331">[</span>inputNumber, setInputNumber<span style="color:#319331">]</span> = useState<span style="color:#319331">(</span><span style="color:#098658">42</span><span style="color:#319331">)</span></div>
<div class="cl">&nbsp;</div>
<div class="cl">    <span style="color:#0000ff">async</span> <span style="color:#0000ff">function</span> runA<span style="color:#319331">()</span> <span style="color:#319331">{</span></div>
<div class="cl">        setLoadingA<span style="color:#7b3814">(</span><span style="color:#0000ff">true</span><span style="color:#7b3814">)</span></div>
<div class="cl">        <span style="color:#0000ff">try</span> <span style="color:#7b3814">{</span></div>
<div class="cl">            setValueA<span style="color:#0431fa">(</span><span style="color:#0000ff">await</span> backend.a<span style="color:#319331">(</span><span style="color:#7b3814">{</span> <span style="color:#0000ff;text-decoration:underline;text-underline-offset:3px;text-decoration-thickness:2px">x</span>: inputNumber <span style="color:#7b3814">}</span><span style="color:#319331">)</span><span style="color:#0431fa">)</span></div>
<div class="cl">        <span style="color:#7b3814">}</span> <span style="color:#0000ff">catch</span> <span style="color:#7b3814">(</span>e<span style="color:#7b3814">)</span> <span style="color:#7b3814">{</span></div>
<div class="cl">            console.error<span style="color:#0431fa">(</span><span style="color:#a31515">&#x27;Error running a:&#x27;</span>, e<span style="color:#0431fa">)</span></div>
<div class="cl">        <span style="color:#7b3814">}</span></div>
<div class="cl">        setLoadingA<span style="color:#7b3814">(</span><span style="color:#0000ff">false</span><span style="color:#7b3814">)</span></div>
<div class="cl">    <span style="color:#319331">}</span></div>
<div class="cl">&nbsp;</div>
<div class="cl">    <span style="color:#0000ff">async</span> <span style="color:#0000ff">function</span> runB<span style="color:#319331">()</span> <span style="color:#319331">{</span></div>
<div class="cl">        setLoadingB<span style="color:#7b3814">(</span><span style="color:#0000ff">true</span><span style="color:#7b3814">)</span></div>
<div class="cl">        <span style="color:#0000ff">try</span> <span style="color:#7b3814">{</span></div>
<div class="cl">            setValueB<span style="color:#0431fa">(</span><span style="color:#0000ff">await</span> backend.b<span style="color:#319331">(</span><span style="color:#7b3814">{</span> format: <span style="color:#a31515">&#x27;locale&#x27;</span> <span style="color:#7b3814">}</span><span style="color:#319331">)</span><span style="color:#0431fa">)</span></div>
<div class="cl">        <span style="color:#7b3814">}</span> <span style="color:#0000ff">catch</span> <span style="color:#7b3814">(</span>e<span style="color:#7b3814">)</span> <span style="color:#7b3814">{</span></div>
<div class="cl">            console.error<span style="color:#0431fa">(</span><span style="color:#a31515">&#x27;Error running b:&#x27;</span>, e<span style="color:#0431fa">)</span></div>
<div class="cl">        <span style="color:#7b3814">}</span></div>
<div class="cl">        setLoadingB<span style="color:#7b3814">(</span><span style="color:#0000ff">false</span><span style="color:#7b3814">)</span></div>
<div class="cl">    <span style="color:#319331">}</span></div>
<div class="cl">&nbsp;</div>
<div class="cl">    <span style="color:#0000ff">async</span> <span style="color:#0000ff">function</span> runBoth<span style="color:#319331">()</span> <span style="color:#319331">{</span></div>
<div class="cl">        setLoadingA<span style="color:#7b3814">(</span><span style="color:#0000ff">true</span><span style="color:#7b3814">)</span></div>
<div class="cl">        setLoadingB<span style="color:#7b3814">(</span><span style="color:#0000ff">true</span><span style="color:#7b3814">)</span></div>
<div class="cl">        <span style="color:#0000ff">try</span> <span style="color:#7b3814">{</span></div>
<div class="cl">            <span style="color:#0000ff">const</span> <span style="color:#0431fa">[</span>resultA, resultB<span style="color:#0431fa">]</span> = <span style="color:#0000ff">await</span> Promise.all<span style="color:#0431fa">(</span><span style="color:#319331">[</span></div>
<div class="cl">                backend.a<span style="color:#7b3814">(</span><span style="color:#0431fa">{</span> x: inputNumber <span style="color:#0431fa">}</span><span style="color:#7b3814">)</span>,</div>
<div class="cl">                backend.b<span style="color:#7b3814">(</span><span style="color:#0431fa">{</span> format: <span style="color:#a31515">&#x27;iso&#x27;</span> <span style="color:#0431fa">}</span><span style="color:#7b3814">)</span></div>
<div class="cl">            <span style="color:#319331">]</span><span style="color:#0431fa">)</span></div>
<div class="cl">            setValueA<span style="color:#0431fa">(</span>resultA<span style="color:#0431fa">)</span></div>
<div class="cl">            setValueB<span style="color:#0431fa">(</span>resultB<span style="color:#0431fa">)</span></div>
<div class="cl">        <span style="color:#7b3814">}</span> <span style="color:#0000ff">catch</span> <span style="color:#7b3814">(</span>e<span style="color:#7b3814">)</span> <span style="color:#7b3814">{</span></div>
<div class="cl">            console.error<span style="color:#0431fa">(</span><span style="color:#a31515">&#x27;Error running both:&#x27;</span>, e<span style="color:#0431fa">)</span></div>
<div class="cl">        <span style="color:#7b3814">}</span></div>
<div class="cl">        setLoadingA<span style="color:#7b3814">(</span><span style="color:#0000ff">false</span><span style="color:#7b3814">)</span></div>
<div class="cl">        setLoadingB<span style="color:#7b3814">(</span><span style="color:#0000ff">false</span><span style="color:#7b3814">)</span></div>
<div class="cl">    <span style="color:#319331">}</span></div>
<div class="cl">&nbsp;</div>
<div class="cl">    <span style="color:#0000ff">return</span> <span style="color:#319331">(</span></div>
<div class="cl">        <span style="color:#800000">&lt;div</span> <span style="color:#ff0000">className</span>=<span style="color:#0000ff">&quot;container&quot;</span><span style="color:#800000">&gt;</span></div>
<div class="cl">            <span style="color:#800000">&lt;h1&gt;</span>Full-code app demo<span style="color:#800000">&lt;/h1&gt;</span></div>
<div class="cl">            <span style="color:#800000">&lt;p</span> <span style="color:#ff0000">className</span>=<span style="color:#0000ff">&quot;subtitle&quot;</span><span style="color:#800000">&gt;</span>Calling 2 backend runnables<span style="color:#800000">&lt;/p&gt;</span></div>
<div class="cl">&nbsp;</div>
<div class="cl">            <span style="color:#800000">&lt;div</span> <span style="color:#ff0000">className</span>=<span style="color:#0000ff">&quot;input-section&quot;</span><span style="color:#800000">&gt;</span></div>
<div class="cl">                <span style="color:#800000">&lt;label&gt;</span></div>
<div class="cl">                    Input number:</div>
<div class="cl">                    <span style="color:#800000">&lt;input</span></div>
<div class="cl">                        <span style="color:#ff0000">type</span>=<span style="color:#0000ff">&quot;number&quot;</span></div>
<div class="cl">                        <span style="color:#ff0000">value</span>=<span style="color:#0431fa">{inputNumber}</span></div>
<div class="cl">                        <span style="color:#ff0000">onChange</span>=<span style="color:#0431fa">{(e) =&gt; setInputNumber(Number(e.target.value))}</span></div>
<div class="cl">                    <span style="color:#800000">/&gt;</span></div>
<div class="cl">                <span style="color:#800000">&lt;/label&gt;</span></div>
<div class="cl">            <span style="color:#800000">&lt;/div&gt;</span></div>
<div class="cl">&nbsp;</div>
<div class="cl">            <span style="color:#800000">&lt;div</span> <span style="color:#ff0000">className</span>=<span style="color:#0000ff">&quot;buttons&quot;</span><span style="color:#800000">&gt;</span></div>
<div class="cl">                <span style="color:#800000">&lt;button</span> <span style="color:#ff0000">onClick</span>=<span style="color:#0431fa">{runA}</span> <span style="color:#ff0000">disabled</span>=<span style="color:#0431fa">{loadingA}</span><span style="color:#800000">&gt;</span></div>
<div class="cl">                    <span style="color:#0431fa">{loadingA ? &#x27;Running...&#x27; : &#x27;Multiply number&#x27;}</span></div>
<div class="cl">                <span style="color:#800000">&lt;/button&gt;</span></div>
<div class="cl">                <span style="color:#800000">&lt;button</span> <span style="color:#ff0000">onClick</span>=<span style="color:#0431fa">{runB}</span> <span style="color:#ff0000">disabled</span>=<span style="color:#0431fa">{loadingB}</span><span style="color:#800000">&gt;</span></div>
<div class="cl">                    <span style="color:#0431fa">{loadingB ? &#x27;Running...&#x27; : &#x27;Get timestamp&#x27;}</span></div>
<div class="cl">                <span style="color:#800000">&lt;/button&gt;</span></div>
<div class="cl">                <span style="color:#800000">&lt;button</span> <span style="color:#ff0000">onClick</span>=<span style="color:#0431fa">{runBoth}</span> <span style="color:#ff0000">disabled</span>=<span style="color:#0431fa">{loadingA || loadingB}</span><span style="color:#800000">&gt;</span></div>
<div class="cl">                    Run both</div>
<div class="cl">                <span style="color:#800000">&lt;/button&gt;</span></div>
<div class="cl">            <span style="color:#800000">&lt;/div&gt;</span></div>
<div class="cl">&nbsp;</div>
<div class="cl">            <span style="color:#800000">&lt;div</span> <span style="color:#ff0000">className</span>=<span style="color:#0000ff">&quot;results&quot;</span><span style="color:#800000">&gt;</span></div>
<div class="cl">                <span style="color:#800000">&lt;div</span> <span style="color:#ff0000">className</span>=<span style="color:#0000ff">&quot;result-card&quot;</span><span style="color:#800000">&gt;</span></div>
<div class="cl">                    <span style="color:#800000">&lt;h3&gt;</span>Multiply (TypeScript)<span style="color:#800000">&lt;/h3&gt;</span></div>
<div class="cl">                    <span style="color:#800000">&lt;div</span> <span style="color:#ff0000">className</span>=<span style="color:#0000ff">&quot;result-value&quot;</span><span style="color:#800000">&gt;</span></div>
<div class="cl">                        <span style="color:#0431fa">{loadingA ? &#x27;Loading...&#x27; : valueA ?? &#x27;Click a button to see result&#x27;}</span></div>
<div class="cl">                    <span style="color:#800000">&lt;/div&gt;</span></div>
<div class="cl">                <span style="color:#800000">&lt;/div&gt;</span></div>
<div class="cl">&nbsp;</div>
<div class="cl">                <span style="color:#800000">&lt;div</span> <span style="color:#ff0000">className</span>=<span style="color:#0000ff">&quot;result-card&quot;</span><span style="color:#800000">&gt;</span></div>
<div class="cl">                    <span style="color:#800000">&lt;h3&gt;</span>Timestamp (Python)<span style="color:#800000">&lt;/h3&gt;</span></div>
<div class="cl">                    <span style="color:#800000">&lt;div</span> <span style="color:#ff0000">className</span>=<span style="color:#0000ff">&quot;result-value&quot;</span><span style="color:#800000">&gt;</span></div>
<div class="cl">                        <span style="color:#0431fa">{loadingB ? &#x27;Loading...&#x27; : valueB ?? &#x27;Click a button to see result&#x27;}</span></div>
<div class="cl">                    <span style="color:#800000">&lt;/div&gt;</span></div>
<div class="cl">                <span style="color:#800000">&lt;/div&gt;</span></div>
<div class="cl">            <span style="color:#800000">&lt;/div&gt;</span></div>
<div class="cl">        <span style="color:#800000">&lt;/div&gt;</span></div>
<div class="cl">    )</div>
<div class="cl">}</div>
<div class="cl">&nbsp;</div>
<div class="cl"><span style="color:#0000ff">export default</span> App</div></div>
</div>
<div class="abs" style="left:1942px;top:194px;width:25px;height:614px;background:#c1c1c1;border-top:4px solid #555"></div>
<div class="abs" style="left:1942px;top:808px;width:1px;height:1288px;background:#ececec"></div>
<div class="abs" style="left:729px;top:2073px;width:907px;height:23px;background:rgba(100,100,100,0.4)"></div>
<div class="abs" style="left:1967px;top:78px;width:2px;height:2018px;background:#f3f3f3"></div><div class="abs" style="left:1969px;top:78px;width:8px;height:2018px;background:#dbdbdb"></div>

<!-- preview -->
<div class="abs" style="left:1977px;top:78px;width:1378px;height:2018px;background:#fff"></div>
<div class="abs mono" style="left:2986px;top:84px;width:133px;height:48px;border-radius:9px;background:#e5e7eb;font-size:24px;line-height:52px;text-align:center;color:#111">esbuild</div>
<div class="abs" style="left:3135px;top:78px;width:60px;height:60px;border-radius:10px;background:#e5e7eb"></div>
<div class="ic" style="left:3152.0px;top:95.0px;width:26px;height:26px"><svg width="26" height="26" viewBox="0 0 24 24" fill="none" stroke="#111" stroke-width="2.2" stroke-linecap="round" stroke-linejoin="round" ><path d="M12.034 12.681a.498.498 0 0 1 .647-.647l9 3.5a.5.5 0 0 1-.033.943l-3.444 1.068a1 1 0 0 0-.66.66l-1.067 3.443a.5.5 0 0 1-.943.033z"/><path d="M5 3a2 2 0 0 0-2 2"/><path d="M19 3a2 2 0 0 1 2 2"/><path d="M5 21a2 2 0 0 1-2-2"/><path d="M9 3h1"/><path d="M9 21h2"/><path d="M14 3h1"/><path d="M3 9v1"/><path d="M21 9v2"/><path d="M3 14v1"/></svg></div>
<div class="abs" style="left:3211px;top:80px;width:56px;height:56px;border-radius:10px;background:#e5e7eb"></div>
<div class="ic" style="left:3227.0px;top:96.0px;width:24px;height:24px"><svg width="24" height="24" viewBox="0 0 24 24" fill="none" stroke="#111" stroke-width="2.2" stroke-linecap="round" stroke-linejoin="round" ><path d="M21 13v6a2 2 0 0 1-2 2H5a2 2 0 0 1-2-2V5a2 2 0 0 1 2-2h6"/><path d="m21 3-9 9"/><path d="M15 3h6v6"/></svg></div>
<div class="abs" style="left:3283px;top:80px;width:56px;height:56px;border-radius:10px;background:#e5e7eb"></div>
<div class="ic" style="left:3299.0px;top:96.0px;width:24px;height:24px"><svg width="24" height="24" viewBox="0 0 24 24" fill="none" stroke="#111" stroke-width="2.2" stroke-linecap="round" stroke-linejoin="round" ><path d="M3 12a9 9 0 0 1 9-9 9.75 9.75 0 0 1 6.74 2.74L21 8"/><path d="M21 3v5h-5"/><path d="M21 12a9 9 0 0 1-9 9 9.75 9.75 0 0 1-6.74-2.74L3 16"/><path d="M8 16H3v5"/></svg></div>

<div class="abs" style="left:2067px;top:180px;font-size:63px;font-weight:bold;color:#333;letter-spacing:-0.3px;white-space:nowrap">Full-code app demo</div>
<div class="abs" style="left:2067px;top:264px;font-size:32px;color:#666;white-space:nowrap">Calling 2 backend runnables</div>
<div class="abs" style="left:2068px;top:368px;font-size:31px;font-weight:bold;color:#111;white-space:nowrap">Input number:</div>
<div class="abs" style="left:2295px;top:349px;width:252px;height:72px;border:2px solid #d0d0d0;border-radius:12px;background:#fff"><div class="abs" style="left:24px;top:0;line-height:68px;font-size:32px;color:#111">42</div></div>
<div class="pbtn" style="left:2067px;width:272px">Multiply number</div>
<div class="pbtn" style="left:2360px;width:257px">Get timestamp</div>
<div class="pbtn" style="left:2638px;width:189px;background:#4a80ea;border-color:#4a80ea;color:#fff">Run both</div>
<div class="card" style="top:586px"><div class="clab">MULTIPLY (TYPESCRIPT)</div><div class="cres">Click a button to see result</div></div>
<div class="card" style="top:783px"><div class="clab">TIMESTAMP (PYTHON)</div><div class="cres">Click a button to see result</div></div>

<!-- logs -->
<div class="abs" style="left:2355px;top:1616px;width:1000px;height:480px;border:2px solid #e3e5ea;border-radius:12px 12px 0 0;background:#fafbfd;overflow:hidden">
  <div class="abs" style="left:0;top:0;width:988px;height:490px;overflow:hidden"><div class="abs" style="left:9px;top:22px"><div class="lg">Using idb cache for csstype@3.2.3 …</div><div class="lg">Initializing esbuild worker...</div><div class="lg">Using idb cache for csstype@3.2.3 …</div><div class="lg">&nbsp;</div><div class="lg">[esbuild] Build started...</div><div class="lg">updated node_modules/</div><div class="lg">updated node_modules/</div><div class="lg">[esbuild] Build failed: You need to wait for the promise returned from `initialize` to be resolved before calling this</div><div class="lg">&nbsp;</div><div class="lg">esbuild worker initialized</div><div class="lg">&nbsp;</div><div class="lg">[esbuild] Build started...</div><div class="lg">[esbuild] Build successful in 0.47s</div></div></div>
  <div class="abs" style="left:0;top:0;width:1000px;height:36px;background:#fafbfd"></div>
  <div class="abs" style="left:25px;top:6px;font-size:24px;color:#374151;line-height:30px">Logs</div>
  <div class="abs" style="left:136px;top:6px;font-size:24px;color:#9ca3af;line-height:30px">(75)</div>
</div>
<div class="ic" style="left:2453.0px;top:1627.0px;width:20px;height:20px"><svg width="20" height="20" viewBox="0 0 24 24" fill="none" stroke="#374151" stroke-width="2" stroke-linecap="round" stroke-linejoin="round" ><path d="m6 9 6 6 6-6"/></svg></div>

</body></html>
